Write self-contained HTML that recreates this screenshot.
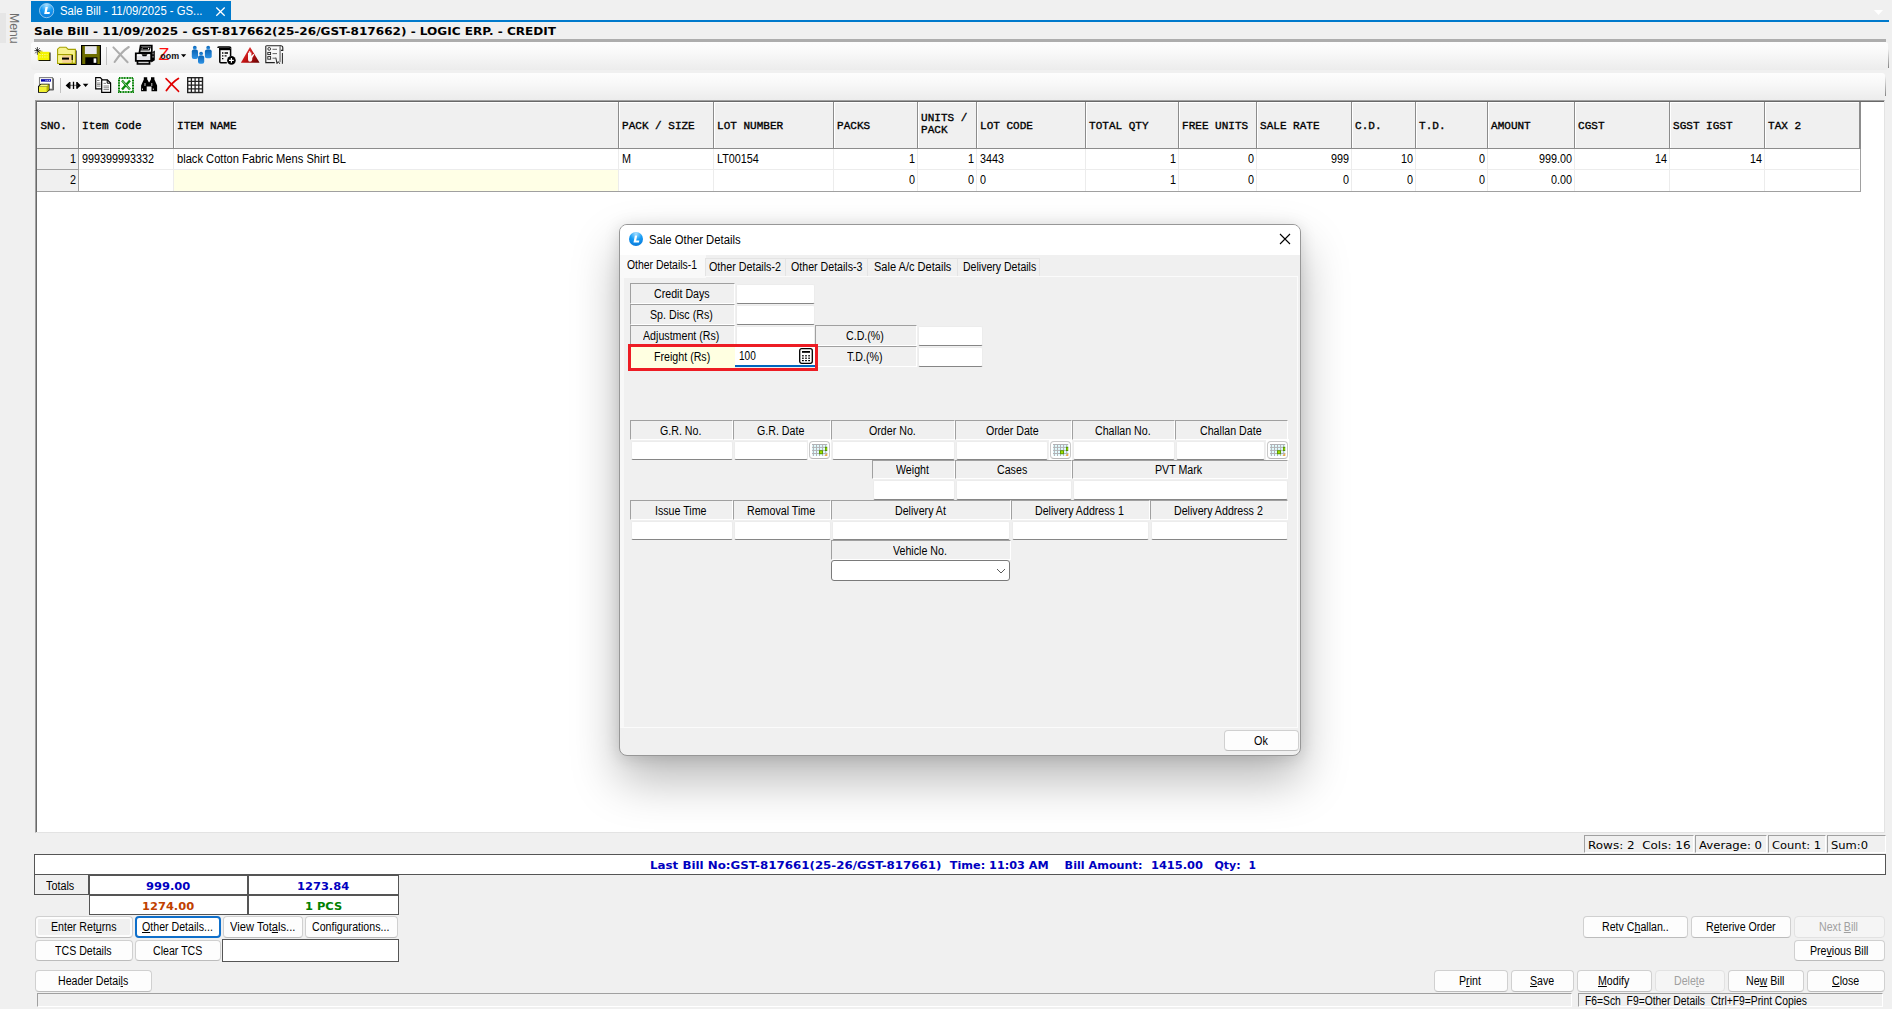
<!DOCTYPE html>
<html lang="en"><head><meta charset="utf-8"><title>Sale Bill - Sale Other Details</title>
<style>
html,body{margin:0;padding:0;background:#f0f0f0}
body{width:1892px;height:1009px;background:#f0f0f0;position:relative;overflow:hidden;font-family:'Liberation Sans',sans-serif;font-size:12px;color:#000}
div{position:absolute;box-sizing:border-box}
svg{position:absolute;overflow:visible}
.t{position:absolute;white-space:pre;transform-origin:0 50%;display:block}
.f-sans{font-family:'Liberation Sans',sans-serif}
.f-mono{font-family:'Liberation Mono',monospace}
.f-dv{font-family:'DejaVu Sans','Liberation Sans',sans-serif}
u{text-decoration:underline;text-underline-offset:1px}
.btn{background:#fdfdfd;border:1px solid #d0d0d0;border-bottom-color:#bcbcbc;border-radius:4px}
.btn.dis{background:#f5f5f5;border-color:#e2e2e2}
.lbl{background:#f0f0f0;border:1px solid #a0a0a0;border-right-color:#fff;border-bottom-color:#fff}
.inp{background:#fff;border:1px solid #ececec;border-bottom-color:#868686;border-radius:2px}
.cal{background:#fff;border:1px solid #c8c8c8;border-bottom-color:#b8b8b8;border-radius:4px}
</style></head>
<body>
<div style="left:0px;top:13px;width:6px;height:30px;background:#e6e6e6"></div>
<span class="t f-sans" style="left:6.5px;top:13px;font-size:13.5px;line-height:14px;color:#6d6d6d;transform-origin:0 0;transform:rotate(90deg) scaleX(0.905) translateY(-100%);margin-top:0">Menu</span>
<div style="left:31px;top:1px;width:200px;height:21px;background:#007acc"></div>
<div style="left:31px;top:20px;width:1858px;height:2px;background:#007acc"></div>
<svg style="left:1874px;top:10px" width="9" height="5" viewBox="0 0 9 5"><path d="M0 0h9L4.5 5z" fill="#fff"/></svg>
<span class="t f-sans" style="left:59.70px;top:4px;font-size:12px;line-height:14px;color:#fff;transform:scaleX(0.9424);">Sale Bill - 11/09/2025 - GS...</span>
<svg style="left:214.5px;top:6px" width="11" height="11" viewBox="0 0 11 11"><path d="M1.300 1.500l8.400 8.200M9.700 1.500l-8.400 8.200" stroke="#fff" stroke-width="1.250" fill="none"/></svg>
<span class="t f-dv" style="left:34.00px;top:25px;font-size:11px;line-height:13px;font-weight:bold;transform:scaleX(1.0963);">Sale Bill - 11/09/2025 - GST-817662(25-26/GST-817662) - LOGIC ERP. - CREDIT</span>
<div style="left:34px;top:39px;width:1852px;height:3px;background:#adadad"></div>
<div style="left:31px;top:42px;width:1857px;height:28px;background:linear-gradient(#fdfdfd,#f9f9f9 35%,#ececec);border-radius:3px"></div>
<div style="left:34px;top:73px;width:1851px;height:27px;background:linear-gradient(#fdfdfd,#f9f9f9 35%,#ececec);border-radius:3px"></div>
<div style="left:1888px;top:49px;width:1px;height:19px;background:linear-gradient(rgba(128,128,128,0),#858585)"></div>
<div style="left:1885px;top:76px;width:1px;height:20px;background:linear-gradient(rgba(128,128,128,0),#858585)"></div>
<svg style="left:30px;top:42px" width="262" height="27" viewBox="30 42 262 27">
<defs>
<linearGradient id="pb" x1="0" y1="0" x2="0" y2="1"><stop offset="0" stop-color="#0a63b3"/><stop offset="1" stop-color="#2e93e6"/></linearGradient>
<linearGradient id="rt" x1="0" y1="0" x2="1" y2="1"><stop offset="0" stop-color="#f04040"/><stop offset="0.55" stop-color="#c01010"/><stop offset="1" stop-color="#600000"/></linearGradient>
</defs>
<!-- new folder -->
<rect x="38.5" y="52.5" width="12" height="8.5" fill="#000"/>
<rect x="37.7" y="51.8" width="11.8" height="8.3" fill="#f4f400"/>
<rect x="38" y="50.6" width="4.5" height="1.6" fill="#d8d840"/>
<path d="M39.5 54.5h8M39.5 57h8" stroke="#fafa90" stroke-width="1" stroke-dasharray="1.2 1.2"/>
<path d="M37.400 47v3M37.400 51.800v3M34.400 50.600h2.400M38.600 50.600h2M35.400 48.200l4.600 5M39.800 48.200l-1.600 1.700M36.800 51.500l-1.600 1.800" stroke="#333" stroke-width="0.850"/><path d="M36.600 49.800l1.800 1.800" stroke="#000" stroke-width="1.300"/>
<!-- open folder -->
<path d="M59 65h17.6V50.5h-2V63.5H59z" fill="#000"/>
<path d="M57.6 63.4V49.2l2.2-2h6.2l2.2 2.2h7.2v14z" fill="#f7f28e" stroke="#a3a000" stroke-width="1.1"/>
<path d="M57.6 54.6h14.6v8.8" fill="none" stroke="#a3a000" stroke-width="1.1"/>
<rect x="60.5" y="55.6" width="11" height="7" fill="#f6c89a" opacity="0.8"/>
<rect x="58.3" y="55.3" width="4" height="7.6" fill="#f7f28e"/>
<rect x="62" y="57.6" width="7" height="2" fill="#000"/>
<rect x="71.6" y="55" width="1.2" height="5" fill="#000"/>
<!-- floppy -->
<rect x="81" y="45" width="20" height="20" fill="#000"/>
<rect x="82.2" y="46" width="17.6" height="18" fill="#6e6e00"/>
<rect x="84.9" y="46.2" width="11.8" height="7.8" fill="#e8e8f0"/>
<rect x="85.3" y="57.3" width="12.1" height="7.7" fill="#000"/>
<rect x="93.6" y="58.4" width="2.7" height="4.4" fill="#fff"/>
<!-- separator -->
<rect x="106" y="47" width="1" height="18" fill="#c2c2c2"/>
<!-- grey X -->
<path d="M113.400 47.400L127.600 62.200" stroke="#adadad" stroke-width="2" stroke-linecap="round"/>
<path d="M128.800 47C124 50 118 57 114.600 62" stroke="#adadad" stroke-width="2.100" stroke-linecap="round" fill="none"/>
<!-- printer -->
<path d="M140.6 45.7h11.2v7h-12.400z" fill="#fff" stroke="#000" stroke-width="1.700"/>
<path d="M141.600 47.300h8.600l-1 2.700h-8.600z" fill="#fff" stroke="#000" stroke-width="1.100"/>
<path d="M142.400 48.700h5.600" stroke="#000" stroke-width="1.400"/>
<path d="M135.800 53.400h15.400v7.400h-15.400z" fill="#e4e4e8" stroke="#000" stroke-width="1.800"/>
<path d="M151.400 52.800l3.400-2.400v9.800l-3.400 2.400z" fill="#000"/>
<rect x="152.400" y="52.600" width="1.300" height="1.800" fill="#888"/><rect x="152.400" y="55.800" width="1.300" height="1.800" fill="#888"/>
<path d="M137 55h13" stroke="#fff" stroke-width="1.400"/>
<path d="M141.500 54.300h6l-1.200 2h-3.600z" fill="#000"/>
<path d="M137.400 61h12.200v3h-12.200z" fill="#777" stroke="#000" stroke-width="1.600"/>
<path d="M138.600 62.400h9.800" stroke="#ddd" stroke-width="1"/>
<!-- zoom -->
<text x="158.600" y="59.900" font-family="'Liberation Sans',sans-serif" font-size="16" fill="#ff1010" textLength="10.8" lengthAdjust="spacingAndGlyphs">Z</text>
<text x="160.3" y="58.5" font-family="'Liberation Sans',sans-serif" font-size="8.5" font-weight="bold" fill="#111" textLength="18.8" lengthAdjust="spacingAndGlyphs">oom</text>
<path d="M181 54.3h5.2l-2.6 3z" fill="#000"/>
<!-- people -->
<g fill="url(#pb)">
<circle cx="194.8" cy="47.7" r="1.9"/><rect x="191.8" y="49.6" width="6.2" height="9.4" rx="2"/>
<circle cx="208.2" cy="47.7" r="1.9"/><rect x="204.9" y="49.6" width="6.8" height="8.6" rx="2"/>
<circle cx="201.1" cy="53.6" r="1.9"/><rect x="198" y="55.4" width="6.2" height="8.4" rx="2"/>
</g>
<!-- calc + plus -->
<path d="M219 47.8h11.4v2.4h-11.4z" fill="#000"/>
<path d="M219.8 48.5v13.2q0 1 1 1h6" fill="none" stroke="#000" stroke-width="1.5"/>
<path d="M230.6 49v7" stroke="#000" stroke-width="1.5"/>
<path d="M217.6 47.8q0.4 -0.8 1.6 -0.8h10q1.6 0 1.8 1.6" fill="none" stroke="#000" stroke-width="1.4"/>
<path d="M222 53h1.4M224.6 53h3.4M222 55.8h1.4M224.6 55.8h2M222 58.6h1.4" stroke="#000" stroke-width="1.3"/>
<circle cx="231.4" cy="60.4" r="4.3" fill="#000"/>
<path d="M229 60.4h4.8M231.4 58v4.8" stroke="#fff" stroke-width="1.2"/>
<!-- red triangle -->
<path d="M250 47L259.6 62.7H240.9z" fill="url(#rt)"/>
<path d="M248 56.600v-3.600q.55-.9 1.100 0v-1.500q.6-.9 1.200 0v1.200q.6-.8 1.150 0v3.300l1.700-1.900q1-.4 1 .7l-1.900 3.100v1.500q-.3 2.400-2.250 2.400q-2 0-2-2.400z" fill="#fff" opacity="0.96"/>
<!-- checklist -->
<path d="M266.200 45.8h14.600q2 0 2 2v2.600h-2.600" fill="none" stroke="#222" stroke-width="1.1"/>
<path d="M280.200 45.8v16M265.800 45.8v16.800h9" fill="none" stroke="#222" stroke-width="1.1"/>
<path d="M282.400 53v10.800" stroke="#222" stroke-width="1"/>
<rect x="279.2" y="46.200" width="1.600" height="16" fill="#aaa"/>
<circle cx="269.200" cy="48.900" r="1.400" fill="none" stroke="#222" stroke-width="0.900"/>
<rect x="267.800" y="52.400" width="2.800" height="2.200" fill="none" stroke="#222" stroke-width="0.900"/>
<rect x="267.800" y="56.600" width="2.800" height="2.600" fill="none" stroke="#222" stroke-width="0.900"/>
<path d="M272.500 49.300h4.500M272.500 53.600h4.500M272.500 58.200h3" stroke="#555" stroke-width="0.900"/>
<path d="M275.800 57.600l1.200 6 1.200-2 1.600 2.200" fill="none" stroke="#222" stroke-width="1"/>
</svg>
<svg style="left:34px;top:73px" width="176" height="27" viewBox="34 73 176 27">
<!-- form + cube -->
<rect x="40.200" y="78.300" width="13.400" height="12" fill="#000"/>
<rect x="39.500" y="77.600" width="13" height="11.600" fill="#fff" stroke="#808080" stroke-width="1.100"/>
<rect x="41" y="79.200" width="10" height="2.400" fill="#0000a8"/>
<path d="M45.500 80.400h5" stroke="#fff" stroke-width="0.900" stroke-dasharray="1 0.800"/>
<path d="M38 86.300l2.600-2.500h9l-0.100 6.400-2.800 2.600H38z" fill="#000"/>
<path d="M38.900 86.600h8v5.400h-8z" fill="#f2f230"/>
<path d="M38.900 86.600l2.200-2.200h7.800l-2 2.200z" fill="#ffff80"/>
<path d="M46.900 86.600l2-2.200v5.600l-2 2z" fill="#b8b800"/>
<!-- separator -->
<rect x="60" y="78" width="1" height="15" fill="#c2c2c2"/>
<!-- double arrow -->
<path d="M65.600 85.400l4-3.600v7.200z M80.900 85.400l-4-3.600v7.200z" fill="#000"/>
<path d="M69 85.400h8.500" stroke="#888" stroke-width="1.300"/>
<path d="M69.800 82v6.800M73.500 81.800v7.200M76.900 82v6.800" stroke="#000" stroke-width="1.300"/>
<path d="M82.800 83.800h5.600l-2.800 3.300z" fill="#000"/>
<!-- copy -->
<path d="M95.700 77.700h4.600l1.800 1.800v9.300h-6.400z" fill="#fff" stroke="#000" stroke-width="1.200"/>
<path d="M97 80.500h2.500M97 83h3.500M97 84.600h3.500M97 86.200h3.500" stroke="#777" stroke-width="0.900"/>
<path d="M101.700 79.800h5.600l3.300 3.300v9.200h-8.900z" fill="#fff" stroke="#000" stroke-width="1.200"/>
<path d="M107.200 79.800v3.400h3.400" fill="none" stroke="#000" stroke-width="1"/>
<path d="M103.500 83.400h2.500M103.500 86h5.500M103.500 87.800h5.500M103.500 89.600h5.500" stroke="#777" stroke-width="0.900"/>
<!-- excel -->
<rect x="119" y="78" width="14" height="14" fill="#fff" stroke="#008000" stroke-width="2" stroke-dasharray="1.100 0.500"/>
<path d="M122 80.500l8 9M130 80.500l-8 9" stroke="#0a8a0a" stroke-width="2.400"/>
<path d="M122.500 81l7.500 8.500" stroke="#fff" stroke-width="0.600"/>
<!-- binoculars -->
<path d="M143.800 77.200h3.400v2l1.600 3h0.600l1.600-3v-2h3.400v2.200l2.700 6.200v5.600h-5.600v-4.800h-4.800v4.800h-5.600v-5.600l2.700-6.200z" fill="#000"/>
<path d="M142.500 88.500v1.500M153.300 88.500v1.500M145 83v3M151.800 83v3" stroke="#ddd" stroke-width="0.900"/>
<!-- red X -->
<path d="M166 78.600L178.600 91.400" stroke="#e00000" stroke-width="1.500" stroke-linecap="round"/>
<path d="M178.400 78.400C174 81 169.500 86 166.400 90.600" stroke="#e00000" stroke-width="1.800" stroke-linecap="round" fill="none"/>
<!-- grid -->
<rect x="187.700" y="77.700" width="14.800" height="14.800" fill="#fff" stroke="#222" stroke-width="1.400"/>
<path d="M191.400 77.700v14.800M195.100 77.700v14.800M198.800 77.700v14.800M187.700 81.400h14.800M187.700 85.100h14.800M187.700 88.800h14.800" stroke="#222" stroke-width="1.300"/>
</svg>
<svg style="left:39px;top:3px" width="16" height="16" viewBox="0 0 16 16"><defs><radialGradient id="lg1" cx="0.5" cy="0.12" r="0.9"><stop offset="0" stop-color="#a8e0ff"/><stop offset="0.5" stop-color="#169cf5"/><stop offset="1" stop-color="#0a78d8"/></radialGradient></defs><circle cx="7.600" cy="7.600" r="7.100" fill="url(#lg1)" stroke="#cfe6f7" stroke-width="0.700"/><path d="M6.500 4.100h2.300l-.9 4.900h3l-.35 1.900H5.200z" fill="#fff"/></svg>
<div style="left:35px;top:100px;width:1850px;height:733px;background:#fff;border:1px solid #a0a0a0;border-right-color:#e3e3e3;border-bottom-color:#e3e3e3"></div>
<div style="left:36px;top:101px;width:1848px;height:731px;border:1px solid #696969;border-right:0;border-bottom:0"></div>
<div style="left:37px;top:102px;width:1822px;height:46px;background:#f0f0f0;border-top:1px solid #fff"></div>
<div style="left:37px;top:148px;width:1822px;height:1px;background:#8c8c8c"></div>
<div style="left:37px;top:149px;width:41px;height:42px;background:#f0f0f0"></div>
<div style="left:37px;top:169px;width:41px;height:1px;background:#a0a0a0"></div>
<div style="left:174px;top:170px;width:444px;height:21px;background:#ffffe6"></div>
<div style="left:79px;top:169px;width:1780px;height:1px;background:#ececec"></div>
<div style="left:37px;top:191px;width:1823px;height:1px;background:#a0a0a0"></div>
<div style="left:78px;top:102px;width:1px;height:46px;background:#8c8c8c"></div>
<div style="left:79px;top:102px;width:1px;height:46px;background:#fff"></div>
<div style="left:78px;top:149px;width:1px;height:42px;background:#a0a0a0"></div>
<div style="left:173px;top:102px;width:1px;height:46px;background:#8c8c8c"></div>
<div style="left:174px;top:102px;width:1px;height:46px;background:#fff"></div>
<div style="left:173px;top:149px;width:1px;height:42px;background:#ececec"></div>
<div style="left:618px;top:102px;width:1px;height:46px;background:#8c8c8c"></div>
<div style="left:619px;top:102px;width:1px;height:46px;background:#fff"></div>
<div style="left:618px;top:149px;width:1px;height:42px;background:#ececec"></div>
<div style="left:713px;top:102px;width:1px;height:46px;background:#8c8c8c"></div>
<div style="left:714px;top:102px;width:1px;height:46px;background:#fff"></div>
<div style="left:713px;top:149px;width:1px;height:42px;background:#ececec"></div>
<div style="left:833px;top:102px;width:1px;height:46px;background:#8c8c8c"></div>
<div style="left:834px;top:102px;width:1px;height:46px;background:#fff"></div>
<div style="left:833px;top:149px;width:1px;height:42px;background:#ececec"></div>
<div style="left:917px;top:102px;width:1px;height:46px;background:#8c8c8c"></div>
<div style="left:918px;top:102px;width:1px;height:46px;background:#fff"></div>
<div style="left:917px;top:149px;width:1px;height:42px;background:#ececec"></div>
<div style="left:976px;top:102px;width:1px;height:46px;background:#8c8c8c"></div>
<div style="left:977px;top:102px;width:1px;height:46px;background:#fff"></div>
<div style="left:976px;top:149px;width:1px;height:42px;background:#ececec"></div>
<div style="left:1085px;top:102px;width:1px;height:46px;background:#8c8c8c"></div>
<div style="left:1086px;top:102px;width:1px;height:46px;background:#fff"></div>
<div style="left:1085px;top:149px;width:1px;height:42px;background:#ececec"></div>
<div style="left:1178px;top:102px;width:1px;height:46px;background:#8c8c8c"></div>
<div style="left:1179px;top:102px;width:1px;height:46px;background:#fff"></div>
<div style="left:1178px;top:149px;width:1px;height:42px;background:#ececec"></div>
<div style="left:1256px;top:102px;width:1px;height:46px;background:#8c8c8c"></div>
<div style="left:1257px;top:102px;width:1px;height:46px;background:#fff"></div>
<div style="left:1256px;top:149px;width:1px;height:42px;background:#ececec"></div>
<div style="left:1351px;top:102px;width:1px;height:46px;background:#8c8c8c"></div>
<div style="left:1352px;top:102px;width:1px;height:46px;background:#fff"></div>
<div style="left:1351px;top:149px;width:1px;height:42px;background:#ececec"></div>
<div style="left:1415px;top:102px;width:1px;height:46px;background:#8c8c8c"></div>
<div style="left:1416px;top:102px;width:1px;height:46px;background:#fff"></div>
<div style="left:1415px;top:149px;width:1px;height:42px;background:#ececec"></div>
<div style="left:1487px;top:102px;width:1px;height:46px;background:#8c8c8c"></div>
<div style="left:1488px;top:102px;width:1px;height:46px;background:#fff"></div>
<div style="left:1487px;top:149px;width:1px;height:42px;background:#ececec"></div>
<div style="left:1574px;top:102px;width:1px;height:46px;background:#8c8c8c"></div>
<div style="left:1575px;top:102px;width:1px;height:46px;background:#fff"></div>
<div style="left:1574px;top:149px;width:1px;height:42px;background:#ececec"></div>
<div style="left:1669px;top:102px;width:1px;height:46px;background:#8c8c8c"></div>
<div style="left:1670px;top:102px;width:1px;height:46px;background:#fff"></div>
<div style="left:1669px;top:149px;width:1px;height:42px;background:#ececec"></div>
<div style="left:1764px;top:102px;width:1px;height:46px;background:#8c8c8c"></div>
<div style="left:1765px;top:102px;width:1px;height:46px;background:#fff"></div>
<div style="left:1764px;top:149px;width:1px;height:42px;background:#ececec"></div>
<div style="left:1859px;top:102px;width:2px;height:47px;background:#8c8c8c"></div>
<div style="left:1860px;top:149px;width:1px;height:43px;background:#a0a0a0"></div>
<span class="t f-mono" style="left:40.40px;top:120px;font-size:11px;line-height:12px;-webkit-text-stroke:0.35px #000;">SNO.</span>
<span class="t f-mono" style="left:82.10px;top:120px;font-size:11px;line-height:12px;-webkit-text-stroke:0.35px #000;">Item Code</span>
<span class="t f-mono" style="left:177.10px;top:120px;font-size:11px;line-height:12px;-webkit-text-stroke:0.35px #000;">ITEM NAME</span>
<span class="t f-mono" style="left:622.10px;top:120px;font-size:11px;line-height:12px;-webkit-text-stroke:0.35px #000;">PACK / SIZE</span>
<span class="t f-mono" style="left:717.10px;top:120px;font-size:11px;line-height:12px;-webkit-text-stroke:0.35px #000;">LOT NUMBER</span>
<span class="t f-mono" style="left:837.10px;top:120px;font-size:11px;line-height:12px;-webkit-text-stroke:0.35px #000;">PACKS</span>
<span class="t f-mono" style="left:921.10px;top:112px;font-size:11px;line-height:12px;-webkit-text-stroke:0.35px #000;">UNITS /</span>
<span class="t f-mono" style="left:921.10px;top:124px;font-size:11px;line-height:12px;-webkit-text-stroke:0.35px #000;">PACK</span>
<span class="t f-mono" style="left:980.10px;top:120px;font-size:11px;line-height:12px;-webkit-text-stroke:0.35px #000;">LOT CODE</span>
<span class="t f-mono" style="left:1089.10px;top:120px;font-size:11px;line-height:12px;-webkit-text-stroke:0.35px #000;">TOTAL QTY</span>
<span class="t f-mono" style="left:1182.10px;top:120px;font-size:11px;line-height:12px;-webkit-text-stroke:0.35px #000;">FREE UNITS</span>
<span class="t f-mono" style="left:1260.10px;top:120px;font-size:11px;line-height:12px;-webkit-text-stroke:0.35px #000;">SALE RATE</span>
<span class="t f-mono" style="left:1355.10px;top:120px;font-size:11px;line-height:12px;-webkit-text-stroke:0.35px #000;">C.D.</span>
<span class="t f-mono" style="left:1419.10px;top:120px;font-size:11px;line-height:12px;-webkit-text-stroke:0.35px #000;">T.D.</span>
<span class="t f-mono" style="left:1491.10px;top:120px;font-size:11px;line-height:12px;-webkit-text-stroke:0.35px #000;">AMOUNT</span>
<span class="t f-mono" style="left:1578.10px;top:120px;font-size:11px;line-height:12px;-webkit-text-stroke:0.35px #000;">CGST</span>
<span class="t f-mono" style="left:1673.10px;top:120px;font-size:11px;line-height:12px;-webkit-text-stroke:0.35px #000;">SGST IGST</span>
<span class="t f-mono" style="left:1768.10px;top:120px;font-size:11px;line-height:12px;-webkit-text-stroke:0.35px #000;">TAX 2</span>
<span class="t f-sans" style="left:69.58px;top:152px;font-size:12px;line-height:14px;transform:scaleX(0.9000);">1</span>
<span class="t f-sans" style="left:69.58px;top:173px;font-size:12px;line-height:14px;transform:scaleX(0.9000);">2</span>
<span class="t f-sans" style="left:81.80px;top:152px;font-size:12px;line-height:14px;transform:scaleX(0.8989);">999399993332</span>
<span class="t f-sans" style="left:176.80px;top:152px;font-size:12px;line-height:14px;transform:scaleX(0.9282);">black Cotton Fabric Mens Shirt BL</span>
<span class="t f-sans" style="left:621.80px;top:152px;font-size:12px;line-height:14px;transform:scaleX(0.9000);">M</span>
<span class="t f-sans" style="left:716.80px;top:152px;font-size:12px;line-height:14px;transform:scaleX(0.9000);">LT00154</span>
<span class="t f-sans" style="left:908.58px;top:152px;font-size:12px;line-height:14px;transform:scaleX(0.9000);">1</span>
<span class="t f-sans" style="left:908.58px;top:173px;font-size:12px;line-height:14px;transform:scaleX(0.9000);">0</span>
<span class="t f-sans" style="left:967.58px;top:152px;font-size:12px;line-height:14px;transform:scaleX(0.9000);">1</span>
<span class="t f-sans" style="left:967.58px;top:173px;font-size:12px;line-height:14px;transform:scaleX(0.9000);">0</span>
<span class="t f-sans" style="left:979.80px;top:152px;font-size:12px;line-height:14px;transform:scaleX(0.9000);">3443</span>
<span class="t f-sans" style="left:979.80px;top:173px;font-size:12px;line-height:14px;transform:scaleX(0.9000);">0</span>
<span class="t f-sans" style="left:1169.58px;top:152px;font-size:12px;line-height:14px;transform:scaleX(0.9000);">1</span>
<span class="t f-sans" style="left:1169.58px;top:173px;font-size:12px;line-height:14px;transform:scaleX(0.9000);">1</span>
<span class="t f-sans" style="left:1247.58px;top:152px;font-size:12px;line-height:14px;transform:scaleX(0.9000);">0</span>
<span class="t f-sans" style="left:1247.58px;top:173px;font-size:12px;line-height:14px;transform:scaleX(0.9000);">0</span>
<span class="t f-sans" style="left:1330.57px;top:152px;font-size:12px;line-height:14px;transform:scaleX(0.9000);">999</span>
<span class="t f-sans" style="left:1342.58px;top:173px;font-size:12px;line-height:14px;transform:scaleX(0.9000);">0</span>
<span class="t f-sans" style="left:1400.58px;top:152px;font-size:12px;line-height:14px;transform:scaleX(0.9000);">10</span>
<span class="t f-sans" style="left:1406.58px;top:173px;font-size:12px;line-height:14px;transform:scaleX(0.9000);">0</span>
<span class="t f-sans" style="left:1478.58px;top:152px;font-size:12px;line-height:14px;transform:scaleX(0.9000);">0</span>
<span class="t f-sans" style="left:1478.58px;top:173px;font-size:12px;line-height:14px;transform:scaleX(0.9000);">0</span>
<span class="t f-sans" style="left:1538.57px;top:152px;font-size:12px;line-height:14px;transform:scaleX(0.9000);">999.00</span>
<span class="t f-sans" style="left:1550.58px;top:173px;font-size:12px;line-height:14px;transform:scaleX(0.9000);">0.00</span>
<span class="t f-sans" style="left:1654.58px;top:152px;font-size:12px;line-height:14px;transform:scaleX(0.9000);">14</span>
<span class="t f-sans" style="left:1749.58px;top:152px;font-size:12px;line-height:14px;transform:scaleX(0.9000);">14</span>
<div style="left:1584px;top:835px;width:110px;height:18px;border:1px solid #a0a0a0;border-right-color:#fff;border-bottom-color:#fff"></div>
<span class="t f-dv" style="left:1588.20px;top:839px;font-size:11px;line-height:13px;transform:scaleX(1.0881);">Rows: 2  Cols: 16</span>
<div style="left:1695px;top:835px;width:72px;height:18px;border:1px solid #a0a0a0;border-right-color:#fff;border-bottom-color:#fff"></div>
<span class="t f-dv" style="left:1699.20px;top:839px;font-size:11px;line-height:13px;transform:scaleX(1.0611);">Average: 0</span>
<div style="left:1768px;top:835px;width:58px;height:18px;border:1px solid #a0a0a0;border-right-color:#fff;border-bottom-color:#fff"></div>
<span class="t f-dv" style="left:1772.20px;top:839px;font-size:11px;line-height:13px;transform:scaleX(1.0453);">Count: 1</span>
<div style="left:1827px;top:835px;width:59px;height:18px;border:1px solid #a0a0a0;border-right-color:#fff;border-bottom-color:#fff"></div>
<span class="t f-dv" style="left:1831.20px;top:839px;font-size:11px;line-height:13px;transform:scaleX(1.0459);">Sum:0</span>
<div style="left:34px;top:854px;width:1852px;height:21px;background:#fff;border:1px solid #555"></div>
<span class="t f-dv" style="left:650.30px;top:859px;font-size:11px;line-height:13px;font-weight:bold;color:#0000c0;transform:scaleX(1.0769);">Last Bill No:GST-817661(25-26/GST-817661)</span>
<span class="t f-dv" style="left:942.20px;top:859px;font-size:11px;line-height:13px;font-weight:bold;color:#0000c0;transform:scaleX(1.0212);">  Time: 11:03 AM</span>
<span class="t f-dv" style="left:1049.00px;top:859px;font-size:11px;line-height:13px;font-weight:bold;color:#0000c0;transform:scaleX(1.0185);">    Bill Amount:</span>
<span class="t f-dv" style="left:1142.80px;top:859px;font-size:11px;line-height:13px;font-weight:bold;color:#0000c0;transform:scaleX(1.0387);">  1415.00</span>
<span class="t f-dv" style="left:1203.00px;top:859px;font-size:11px;line-height:13px;font-weight:bold;color:#0000c0;">   Qty:</span>
<span class="t f-dv" style="left:1241.40px;top:859px;font-size:11px;line-height:13px;font-weight:bold;color:#0000c0;transform:scaleX(0.9786);">  1</span>
<div style="left:34px;top:874px;width:55px;height:21px;background:#f0f0f0;border:1px solid #555"></div>
<span class="t f-sans" style="left:46.39px;top:879px;font-size:12px;line-height:14px;transform:scaleX(0.9000);">Totals</span>
<div style="left:88px;top:874px;width:160px;height:21px;background:#fff;border:1px solid #555;border-left-width:2px;border-top-width:2px"></div>
<div style="left:247px;top:874px;width:152px;height:21px;background:#fff;border:1px solid #555;border-left-width:2px;border-top-width:2px"></div>
<div style="left:89px;top:894px;width:159px;height:21px;background:#fff;border:1px solid #555;border-top-width:2px"></div>
<div style="left:247px;top:894px;width:152px;height:21px;background:#fff;border:1px solid #555;border-left-width:2px;border-top-width:2px"></div>
<span class="t f-dv" style="left:145.92px;top:880px;font-size:11px;line-height:13px;font-weight:bold;color:#0000c0;transform:scaleX(1.0400);">999.00</span>
<span class="t f-dv" style="left:297.44px;top:880px;font-size:11px;line-height:13px;font-weight:bold;color:#0000c0;transform:scaleX(1.0400);">1273.84</span>
<span class="t f-dv" style="left:141.94px;top:900px;font-size:11px;line-height:13px;font-weight:bold;color:#c04000;transform:scaleX(1.0400);">1274.00</span>
<span class="t f-dv" style="left:304.91px;top:900px;font-size:11px;line-height:13px;font-weight:bold;color:#008000;transform:scaleX(1.0400);">1 PCS</span>
<div class="btn" style="left:35px;top:916px;width:98px;height:22px;background:#f0f0f0;box-shadow:inset 0 0 0 2px #fdfdfd"></div>
<span class="t f-sans" style="left:50.63px;top:920px;font-size:12px;line-height:14px;transform:scaleX(0.8850);">Enter Ret<u>u</u>rns</span>
<div class="btn" style="left:135px;top:916px;width:86px;height:22px;border:2px solid #0f6fca;background:#fff"></div>
<span class="t f-sans" style="left:141.99px;top:920px;font-size:12px;line-height:14px;transform:scaleX(0.8850);"><u>O</u>ther Details...</span>
<div class="btn" style="left:223px;top:916px;width:80px;height:22px;"></div>
<span class="t f-sans" style="left:229.73px;top:920px;font-size:12px;line-height:14px;transform:scaleX(0.9300);">View Tot<u>a</u>ls...</span>
<div class="btn" style="left:305px;top:916px;width:93px;height:22px;"></div>
<span class="t f-sans" style="left:312.23px;top:920px;font-size:12px;line-height:14px;transform:scaleX(0.8850);">Confi<u>g</u>urations...</span>
<div class="btn" style="left:35px;top:940px;width:98px;height:21px;"></div>
<span class="t f-sans" style="left:55.07px;top:944px;font-size:12px;line-height:14px;transform:scaleX(0.8850);">TCS Details</span>
<div class="btn" style="left:135px;top:940px;width:86px;height:21px;"></div>
<span class="t f-sans" style="left:152.71px;top:944px;font-size:12px;line-height:14px;transform:scaleX(0.8850);">Clear TCS</span>
<div style="left:222px;top:939px;width:177px;height:23px;background:#fff;border:1px solid #555"></div>
<div class="btn" style="left:35px;top:970px;width:117px;height:22px;"></div>
<span class="t f-sans" style="left:57.78px;top:974px;font-size:12px;line-height:14px;transform:scaleX(0.8850);">Header Detai<u>l</u>s</span>
<div class="btn" style="left:1583px;top:916px;width:105px;height:22px;"></div>
<span class="t f-sans" style="left:1601.55px;top:920px;font-size:12px;line-height:14px;transform:scaleX(0.8850);">Retv C<u>h</u>allan..</span>
<div class="btn" style="left:1691px;top:916px;width:100px;height:22px;"></div>
<span class="t f-sans" style="left:1705.57px;top:920px;font-size:12px;line-height:14px;transform:scaleX(0.8850);">R<u>e</u>terive Order</span>
<div class="btn dis" style="left:1794px;top:916px;width:91px;height:22px;"></div>
<span class="t f-sans" style="left:1819.42px;top:920px;font-size:12px;line-height:14px;color:#a0a0a0;transform:scaleX(0.8850);">Next <u>B</u>ill</span>
<div class="btn" style="left:1794px;top:940px;width:91px;height:21px;"></div>
<span class="t f-sans" style="left:1809.68px;top:944px;font-size:12px;line-height:14px;transform:scaleX(0.8850);">Pre<u>v</u>ious Bill</span>
<div class="btn" style="left:1434px;top:970px;width:74px;height:22px;"></div>
<span class="t f-sans" style="left:1459.48px;top:974px;font-size:12px;line-height:14px;transform:scaleX(0.8850);">P<u>r</u>int</span>
<div class="btn" style="left:1511px;top:970px;width:63px;height:22px;"></div>
<span class="t f-sans" style="left:1529.79px;top:974px;font-size:12px;line-height:14px;transform:scaleX(0.8850);"><u>S</u>ave</span>
<div class="btn" style="left:1577px;top:970px;width:75px;height:22px;"></div>
<span class="t f-sans" style="left:1598.26px;top:974px;font-size:12px;line-height:14px;transform:scaleX(0.8850);"><u>M</u>odify</span>
<div class="btn dis" style="left:1655px;top:970px;width:70px;height:22px;"></div>
<span class="t f-sans" style="left:1674.05px;top:974px;font-size:12px;line-height:14px;color:#a0a0a0;transform:scaleX(0.8850);">Dele<u>t</u>e</span>
<div class="btn" style="left:1728px;top:970px;width:76px;height:22px;"></div>
<span class="t f-sans" style="left:1746.22px;top:974px;font-size:12px;line-height:14px;transform:scaleX(0.8850);">Ne<u>w</u> Bill</span>
<div class="btn" style="left:1807px;top:970px;width:78px;height:22px;"></div>
<span class="t f-sans" style="left:1831.82px;top:974px;font-size:12px;line-height:14px;transform:scaleX(0.8850);"><u>C</u>lose</span>
<div style="left:37px;top:993px;width:1535px;height:14px;border:1px solid #a0a0a0;border-right-color:#fff;border-bottom-color:#fff"></div>
<div style="left:1578px;top:993px;width:305px;height:14px;border:1px solid #a0a0a0;border-right-color:#fff;border-bottom-color:#fff"></div>
<span class="t f-sans" style="left:1585.00px;top:994px;font-size:12px;line-height:14px;transform:scaleX(0.8601);">F6=Sch  F9=Other Details  Ctrl+F9=Print Copies</span>
<div style="left:619px;top:224px;width:682px;height:532px;background:#f0f0f0;border:1px solid #979797;border-radius:8px;box-shadow:0 24px 48px rgba(0,0,0,0.28),0 2px 16px rgba(0,0,0,0.13);overflow:hidden"><div style="left:0;top:0;width:680px;height:30px;background:#fff"></div></div>
<svg style="left:628px;top:231px" width="16" height="16" viewBox="0 0 16 16"><defs><radialGradient id="lg2" cx="0.5" cy="0.12" r="0.9"><stop offset="0" stop-color="#a8e0ff"/><stop offset="0.5" stop-color="#169cf5"/><stop offset="1" stop-color="#0a78d8"/></radialGradient></defs><circle cx="8" cy="8" r="7" fill="url(#lg2)"/><path d="M6.900 4.500h2.300l-1 5.100h3.100l-.35 1.900H5.500z" fill="#fff"/></svg>
<span class="t f-sans" style="left:649.40px;top:233px;font-size:12px;line-height:14px;transform:scaleX(0.9405);">Sale Other Details</span>
<svg style="left:1279px;top:233px" width="12" height="12" viewBox="0 0 12 12"><path d="M1 1l10 10M11 1L1 11" stroke="#000" stroke-width="1.1" fill="none"/></svg>
<div style="left:620px;top:276px;width:678px;height:452px;background:#f0f0f0;border:1px solid #fbfbfb;border-left:4px solid #f8f8f8"></div>
<div style="left:620px;top:255px;width:86px;height:23px;background:#f9f9f9"></div>
<div style="left:705px;top:258px;width:81px;height:18px;background:#f1f1f1;border:1px solid #e4e4e4;border-bottom:0"></div>
<span class="t f-sans" style="left:709.00px;top:260px;font-size:12px;line-height:14px;transform:scaleX(0.8922);">Other Details-2</span>
<div style="left:785px;top:258px;width:83px;height:18px;background:#f1f1f1;border:1px solid #e4e4e4;border-bottom:0"></div>
<span class="t f-sans" style="left:791.30px;top:260px;font-size:12px;line-height:14px;transform:scaleX(0.8860);">Other Details-3</span>
<div style="left:867px;top:258px;width:91px;height:18px;background:#f1f1f1;border:1px solid #e4e4e4;border-bottom:0"></div>
<span class="t f-sans" style="left:873.80px;top:260px;font-size:12px;line-height:14px;transform:scaleX(0.9209);">Sale A/c Details</span>
<div style="left:957px;top:258px;width:83px;height:18px;background:#f1f1f1;border:1px solid #e4e4e4;border-bottom:0"></div>
<span class="t f-sans" style="left:963.00px;top:260px;font-size:12px;line-height:14px;transform:scaleX(0.8781);">Delivery Details</span>
<span class="t f-sans" style="left:627.30px;top:258px;font-size:12px;line-height:14px;transform:scaleX(0.8674);">Other Details-1</span>
<div class="lbl" style="left:630px;top:283px;width:105px;height:21px;"></div>
<span class="t f-sans" style="left:653.67px;top:287px;font-size:12px;line-height:14px;transform:scaleX(0.8880);">Credit Days</span>
<div class="inp" style="left:736px;top:284px;width:79px;height:20px;"></div>
<div class="lbl" style="left:630px;top:304px;width:105px;height:21px;"></div>
<span class="t f-sans" style="left:650.12px;top:308px;font-size:12px;line-height:14px;transform:scaleX(0.8880);">Sp. Disc (Rs)</span>
<div class="inp" style="left:736px;top:305px;width:79px;height:20px;"></div>
<div class="lbl" style="left:630px;top:325px;width:105px;height:21px;"></div>
<span class="t f-sans" style="left:643.30px;top:329px;font-size:12px;line-height:14px;transform:scaleX(0.8880);">Adjustment (Rs)</span>
<div class="inp" style="left:736px;top:326px;width:79px;height:20px;"></div>
<div class="lbl" style="left:815px;top:325px;width:102px;height:21px;"></div>
<span class="t f-sans" style="left:846.05px;top:329px;font-size:12px;line-height:14px;transform:scaleX(0.8880);">C.D.(%)</span>
<div class="inp" style="left:918px;top:326px;width:65px;height:20px;"></div>
<div class="lbl" style="left:815px;top:346px;width:102px;height:21px;"></div>
<span class="t f-sans" style="left:847.24px;top:350px;font-size:12px;line-height:14px;transform:scaleX(0.8880);">T.D.(%)</span>
<div class="inp" style="left:918px;top:347px;width:65px;height:20px;"></div>
<div style="left:631px;top:347px;width:104px;height:21px;background:#ffffe1"></div>
<span class="t f-sans" style="left:654.18px;top:350px;font-size:12px;line-height:14px;transform:scaleX(0.8880);">Freight (Rs)</span>
<div style="left:735px;top:347px;width:80px;height:20px;background:#fff;border-bottom:2px solid #0067c0"></div>
<span class="t f-sans" style="left:738.80px;top:349px;font-size:12px;line-height:14px;transform:scaleX(0.8387);">100</span>
<svg style="left:799px;top:348px" width="14" height="16" viewBox="0 0 14 16"><rect x="0.7" y="0.7" width="12.6" height="14.6" rx="2" fill="#fff" stroke="#000" stroke-width="1.3"/><rect x="3" y="3" width="8" height="1.8" fill="#000"/><g fill="#000"><rect x="3" y="7.2" width="1.8" height="1.2"/><rect x="6.1" y="7.2" width="1.8" height="1.2"/><rect x="9.2" y="7.2" width="1.8" height="1.2"/><rect x="3" y="9.6" width="1.8" height="1.2"/><rect x="6.1" y="9.6" width="1.8" height="1.2"/><rect x="9.2" y="9.6" width="1.8" height="1.2"/><rect x="3" y="12" width="1.8" height="1.2"/><rect x="6.1" y="12" width="1.8" height="1.2"/><rect x="9.2" y="12" width="1.8" height="1.2"/></g></svg>
<div style="left:628px;top:344px;width:190px;height:27px;border:3px solid #ed1c24"></div>
<div class="lbl" style="left:630px;top:420px;width:103px;height:20px;"></div>
<span class="t f-sans" style="left:659.77px;top:424px;font-size:12px;line-height:14px;transform:scaleX(0.8880);">G.R. No.</span>
<div class="inp" style="left:631px;top:441px;width:102px;height:19px;"></div>
<div class="lbl" style="left:733px;top:420px;width:98px;height:20px;"></div>
<span class="t f-sans" style="left:757.31px;top:424px;font-size:12px;line-height:14px;transform:scaleX(0.8880);">G.R. Date</span>
<div class="inp" style="left:734px;top:441px;width:74px;height:19px;"></div>
<div style="left:808px;top:439px;width:23px;height:21px;background:#fff"></div>
<div class="cal" style="left:809px;top:441px;width:21px;height:18px;"><svg style="left:2px;top:2px" width="16" height="13" viewBox="0 0 16 13"><rect x="0" y="0" width="15.2" height="11.6" fill="#e2fcff"/><path d="M1.4 0v12M4.500 0v12M7.500 0v12M10.600 0v12M13.700 0v11" stroke="#b2b2b6" stroke-width="1"/><path d="M0 0.500h15.200M0 3.400h15.200M0 6.400h15.200M0 9.500h15.200" stroke="#b2b2b6" stroke-width="1"/><rect x="7" y="6.200" width="4" height="4" fill="#5a9c00"/><rect x="8" y="7.200" width="2" height="2" fill="#a6e000"/><rect x="13" y="2.800" width="2.200" height="4.200" fill="#4e9400"/><rect x="13.700" y="3.800" width="1" height="2.200" fill="#a6e000"/><path d="M12.400 12.100l2.900-3.100v3.100z" fill="#e8a848"/></svg></div>
<div class="lbl" style="left:831px;top:420px;width:124px;height:20px;"></div>
<span class="t f-sans" style="left:868.61px;top:424px;font-size:12px;line-height:14px;transform:scaleX(0.8880);">Order No.</span>
<div class="inp" style="left:832px;top:441px;width:123px;height:19px;"></div>
<div class="lbl" style="left:955px;top:420px;width:117px;height:20px;"></div>
<span class="t f-sans" style="left:986.14px;top:424px;font-size:12px;line-height:14px;transform:scaleX(0.8880);">Order Date</span>
<div class="inp" style="left:956px;top:441px;width:92px;height:19px;"></div>
<div style="left:1048.5px;top:439px;width:23px;height:21px;background:#fff"></div>
<div class="cal" style="left:1049.5px;top:441px;width:21px;height:18px;"><svg style="left:2px;top:2px" width="16" height="13" viewBox="0 0 16 13"><rect x="0" y="0" width="15.2" height="11.6" fill="#e2fcff"/><path d="M1.4 0v12M4.500 0v12M7.500 0v12M10.600 0v12M13.700 0v11" stroke="#b2b2b6" stroke-width="1"/><path d="M0 0.500h15.200M0 3.400h15.200M0 6.400h15.200M0 9.500h15.200" stroke="#b2b2b6" stroke-width="1"/><rect x="7" y="6.200" width="4" height="4" fill="#5a9c00"/><rect x="8" y="7.200" width="2" height="2" fill="#a6e000"/><rect x="13" y="2.800" width="2.200" height="4.200" fill="#4e9400"/><rect x="13.700" y="3.800" width="1" height="2.200" fill="#a6e000"/><path d="M12.400 12.100l2.900-3.100v3.100z" fill="#e8a848"/></svg></div>
<div class="lbl" style="left:1072px;top:420px;width:103px;height:20px;"></div>
<span class="t f-sans" style="left:1094.66px;top:424px;font-size:12px;line-height:14px;transform:scaleX(0.8880);">Challan No.</span>
<div class="inp" style="left:1073px;top:441px;width:102px;height:19px;"></div>
<div class="lbl" style="left:1175px;top:420px;width:113px;height:20px;"></div>
<span class="t f-sans" style="left:1199.70px;top:424px;font-size:12px;line-height:14px;transform:scaleX(0.8880);">Challan Date</span>
<div class="inp" style="left:1176px;top:441px;width:89px;height:19px;"></div>
<div style="left:1265.5px;top:439px;width:23px;height:21px;background:#fff"></div>
<div class="cal" style="left:1266.5px;top:441px;width:21px;height:18px;"><svg style="left:2px;top:2px" width="16" height="13" viewBox="0 0 16 13"><rect x="0" y="0" width="15.2" height="11.6" fill="#e2fcff"/><path d="M1.4 0v12M4.500 0v12M7.500 0v12M10.600 0v12M13.700 0v11" stroke="#b2b2b6" stroke-width="1"/><path d="M0 0.500h15.200M0 3.400h15.200M0 6.400h15.200M0 9.500h15.200" stroke="#b2b2b6" stroke-width="1"/><rect x="7" y="6.200" width="4" height="4" fill="#5a9c00"/><rect x="8" y="7.200" width="2" height="2" fill="#a6e000"/><rect x="13" y="2.800" width="2.200" height="4.200" fill="#4e9400"/><rect x="13.700" y="3.800" width="1" height="2.200" fill="#a6e000"/><path d="M12.400 12.100l2.900-3.100v3.100z" fill="#e8a848"/></svg></div>
<div class="lbl" style="left:872px;top:460px;width:83px;height:19px;"></div>
<span class="t f-sans" style="left:896.01px;top:463px;font-size:12px;line-height:14px;transform:scaleX(0.8880);">Weight</span>
<div class="inp" style="left:873px;top:480px;width:82px;height:20px;"></div>
<div class="lbl" style="left:955px;top:460px;width:117px;height:19px;"></div>
<span class="t f-sans" style="left:997.40px;top:463px;font-size:12px;line-height:14px;transform:scaleX(0.8880);">Cases</span>
<div class="inp" style="left:956px;top:480px;width:116px;height:20px;"></div>
<div class="lbl" style="left:1072px;top:460px;width:216px;height:19px;"></div>
<span class="t f-sans" style="left:1155.41px;top:463px;font-size:12px;line-height:14px;transform:scaleX(0.8880);">PVT Mark</span>
<div class="inp" style="left:1073px;top:480px;width:215px;height:20px;"></div>
<div class="lbl" style="left:630px;top:500px;width:103px;height:20px;"></div>
<span class="t f-sans" style="left:654.73px;top:504px;font-size:12px;line-height:14px;transform:scaleX(0.8880);">Issue Time</span>
<div class="inp" style="left:631px;top:521px;width:102px;height:19px;"></div>
<div class="lbl" style="left:733px;top:500px;width:98px;height:20px;"></div>
<span class="t f-sans" style="left:746.95px;top:504px;font-size:12px;line-height:14px;transform:scaleX(0.8880);">Removal Time</span>
<div class="inp" style="left:734px;top:521px;width:97px;height:19px;"></div>
<div class="lbl" style="left:831px;top:500px;width:180px;height:20px;"></div>
<span class="t f-sans" style="left:894.53px;top:504px;font-size:12px;line-height:14px;transform:scaleX(0.8880);">Delivery At</span>
<div class="inp" style="left:832px;top:521px;width:178px;height:19px;"></div>
<div class="lbl" style="left:1011px;top:500px;width:139px;height:20px;"></div>
<span class="t f-sans" style="left:1035.08px;top:504px;font-size:12px;line-height:14px;transform:scaleX(0.8880);">Delivery Address 1</span>
<div class="inp" style="left:1012px;top:521px;width:137px;height:19px;"></div>
<div class="lbl" style="left:1150px;top:500px;width:138px;height:20px;"></div>
<span class="t f-sans" style="left:1173.58px;top:504px;font-size:12px;line-height:14px;transform:scaleX(0.8880);">Delivery Address 2</span>
<div class="inp" style="left:1151px;top:521px;width:137px;height:19px;"></div>
<div class="lbl" style="left:831px;top:540px;width:180px;height:20px;"></div>
<span class="t f-sans" style="left:893.05px;top:544px;font-size:12px;line-height:14px;transform:scaleX(0.8880);">Vehicle No.</span>
<div style="left:831px;top:560px;width:179px;height:21px;background:#fff;border:1px solid #7a7a7a;border-radius:3px"></div>
<svg style="left:996px;top:568px" width="10" height="6" viewBox="0 0 10 6"><path d="M1 1l4 4 4-4" stroke="#5a5a5a" stroke-width="1" fill="none"/></svg>
<div class="btn" style="left:1224px;top:730px;width:75px;height:21px;"></div>
<span class="t f-sans" style="left:1254.10px;top:734px;font-size:12px;line-height:14px;transform:scaleX(0.9000);">Ok</span>
</body></html>
